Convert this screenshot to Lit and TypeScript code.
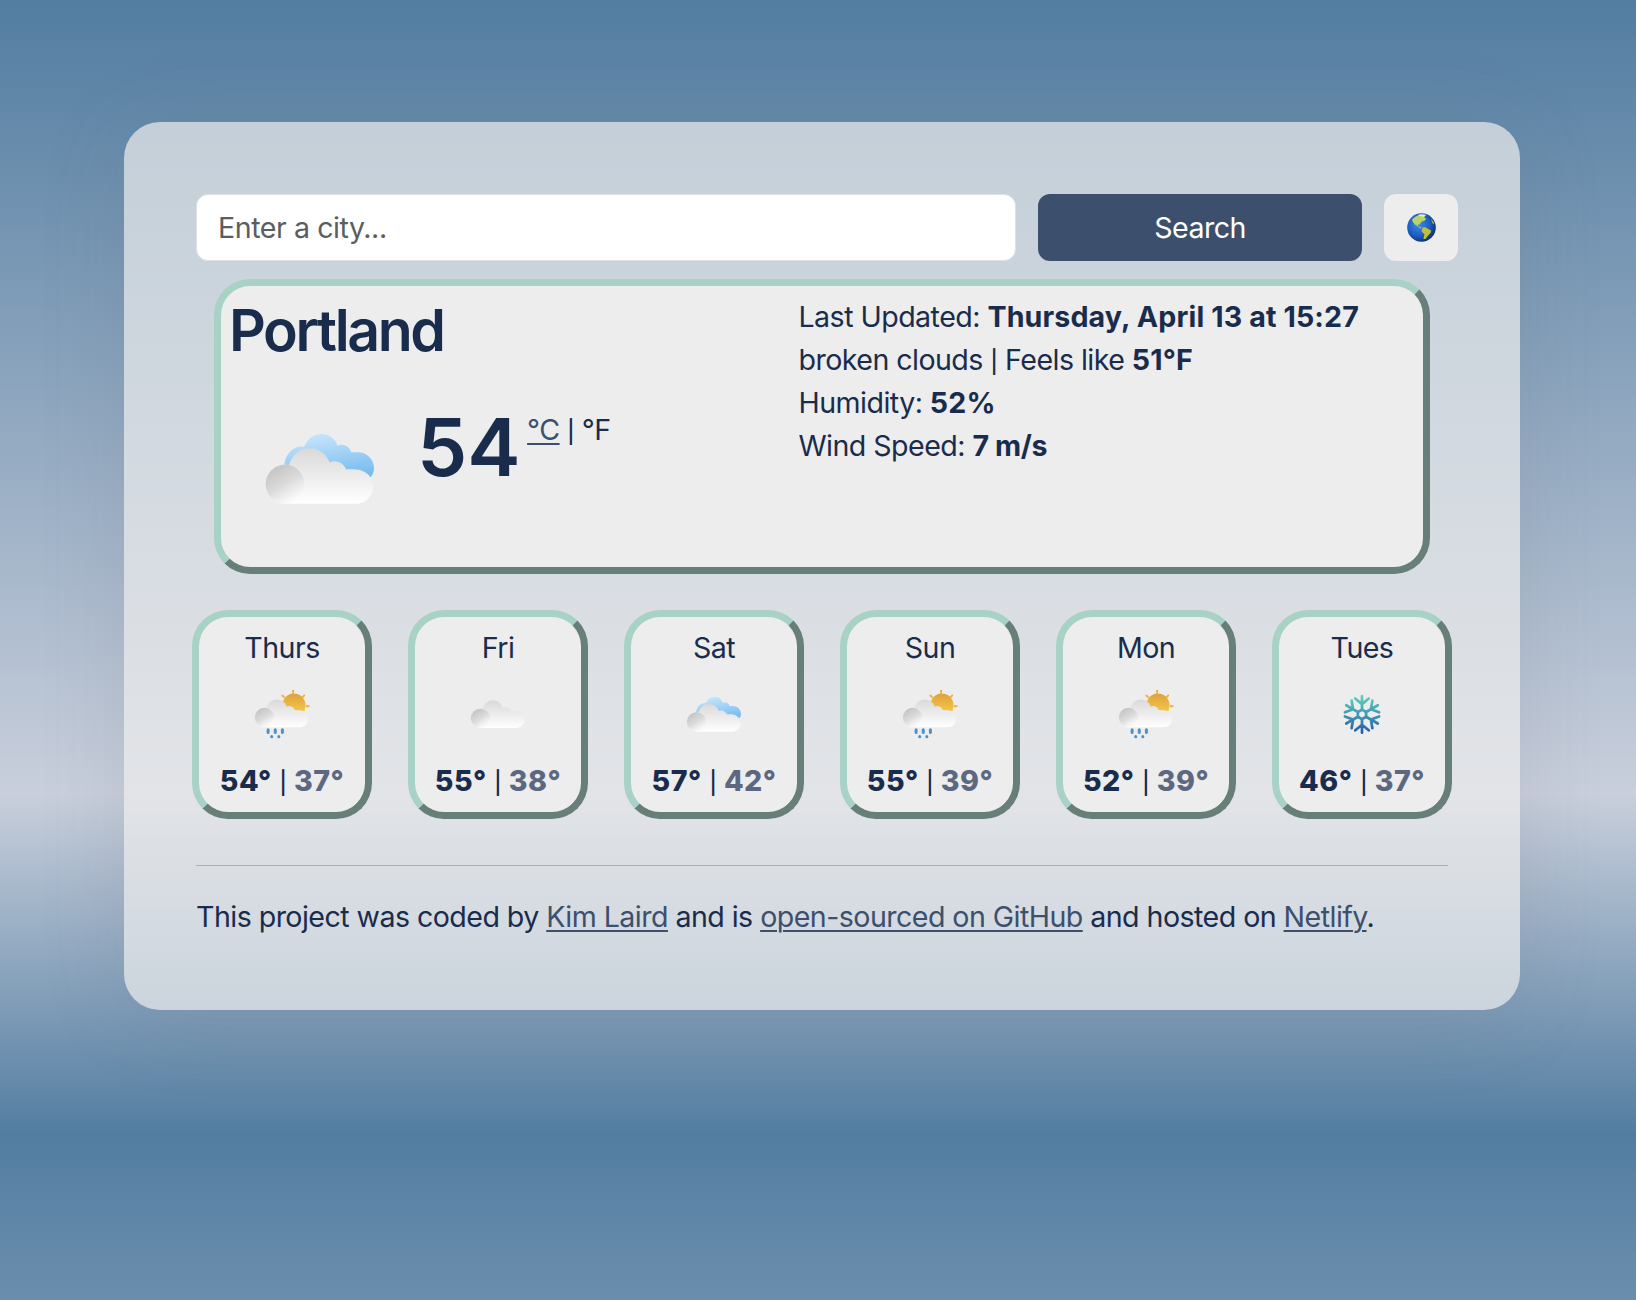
import { LitElement, html, svg, css } from "lit";
import { customElement, property } from "lit/decorators.js";

@customElement("weather-icon")
class WeatherIcon extends LitElement {
  @property() kind = "cloud";
  static styles = css`
    :host { display: block; width: 100%; height: 100%; }
    svg { display: block; width: 100%; height: 100%; overflow: visible; }
  `;
  private cloud(dy = 0) {
    return svg`<g transform="translate(0 ${dy})">
      <path fill="url(#body)" d="M24 86 A24.5 24.5 0 0 1 24 37 L29 37 C33 24 43 16 55 16 C67 16 77 24 80 34 C88 30 98 35 101 43 L112 43 C126 43 135 53 135 64 C135 77 125 86 113 86 Z"/>
      <circle fill="url(#ball)" cx="24" cy="61.5" r="24.5"/>
    </g>`;
  }
  private sun() {
    return svg`<g stroke="#f0b040" stroke-width="5" stroke-linecap="round">
      <path d="M96 -3v5M69 9l4 4M124 9l-4 4M130 36h5"/></g>
      <path fill="url(#sun)" d="M70 25 A29 29 0 0 1 126 41 L125 48 L72 45Z"/>`;
  }
  private rain() {
    return svg`<g stroke="#4b93cc" stroke-width="7.6" stroke-linecap="round">
      <path d="M33 95v7M51 95v7M69 95v7M42 112v1M60 112v1"/></g>`;
  }
  private back() {
    return svg`<path fill="url(#sky)" d="M23 40 C24 24 36 14 48 16 C53 5 61 0 70 0 C80 0 88 7 90 15 C97 11 106 16 107 23 L116 23 C127 23 136 32 136 43 C136 49 134 53 130 56 C124 46 118 45 102 45 L80 60 L30 60Z"/>`;
  }
  private snow() {
    const arms = [0, 60, 120, 180, 240, 300];
    return svg`<g fill="none" stroke="url(#ice)" stroke-width="6.8" stroke-linecap="round" stroke-linejoin="round">
      <path d="${arms.map((a) => {
        const t = (a * Math.PI) / 180;
        const p = (x: number, y: number) =>
          (68 + x * Math.cos(t) - y * Math.sin(t)).toFixed(2) + " " + (56.5 + x * Math.sin(t) + y * Math.cos(t)).toFixed(2);
        return "M" + p(0, -12) + "L" + p(0, -46) + "M" + p(-17, -40) + "L" + p(0, -26) + "L" + p(17, -40) + "M" + p(0, -12) + "L" + p(10.39, -6);
      }).join("")}"/></g>`;
  }
  render() {
    const k = this.kind;
    return html`<svg viewBox="0 0 136 120" aria-hidden="true">
      <defs>
        <linearGradient id="body" gradientUnits="userSpaceOnUse" x1="0" y1="16" x2="0" y2="86"><stop offset="0" stop-color="#d9d9d9"/><stop offset="1" stop-color="#ffffff"/></linearGradient>
        <linearGradient id="ball" x1=".25" y1=".1" x2=".75" y2=".9"><stop offset="0" stop-color="#c6c6c6"/><stop offset=".5" stop-color="#dadada" stop-opacity=".95"/><stop offset="1" stop-color="#fafafa" stop-opacity=".7"/></linearGradient>
        <linearGradient id="sky" x1="0" y1="0" x2=".3" y2="1"><stop offset="0" stop-color="#cfe9fd"/><stop offset="1" stop-color="#7abdee"/></linearGradient>
        <linearGradient id="sun" x1="0" y1="0" x2="0" y2="1"><stop offset="0" stop-color="#dca23f"/><stop offset="1" stop-color="#f4c544"/></linearGradient>
        <linearGradient id="ice" gradientUnits="userSpaceOnUse" x1="0" y1="8" x2="0" y2="106"><stop offset="0" stop-color="#5fd4c0"/><stop offset="1" stop-color="#2459a8"/></linearGradient>
      </defs>
      ${k === "rain" ? svg`${this.sun()}${this.cloud(3)}${this.rain()}` : ""}
      ${k === "cloud" ? this.cloud(5) : ""}
      ${k === "broken" ? svg`<g transform="translate(0 12)">${this.back()}${this.cloud(2)}</g>` : ""}
      ${k === "snow" ? this.snow() : ""}
    </svg>`;
  }
}

interface Day { name: string; icon: string; hi: number; lo: number }

const DAYS: Day[] = [
  { name: "Thurs", icon: "rain", hi: 54, lo: 37 },
  { name: "Fri", icon: "cloud", hi: 55, lo: 38 },
  { name: "Sat", icon: "broken", hi: 57, lo: 42 },
  { name: "Sun", icon: "rain", hi: 55, lo: 39 },
  { name: "Mon", icon: "rain", hi: 52, lo: 39 },
  { name: "Tues", icon: "snow", hi: 46, lo: 37 },
];

@customElement("app-root")
class AppRoot extends LitElement {
  static styles = css`
    :host {
      display: block; box-sizing: border-box; height: 1300px; padding: 122px 116px 0 124px; overflow: hidden;
      background: linear-gradient(#527da1, #c9cfdc 70%, #527da1) 0 0 / 100% 1134px;
      font: 28.6px/43px Inter, "Liberation Sans", sans-serif; color: #1a2c4c;
      letter-spacing: -0.55px;
    }
    * { box-sizing: border-box; }
    .panel {
      height: 888px; padding: 72px; border-radius: 36px; background: rgba(237, 237, 237, .7);
      box-shadow: 0 8px 88px rgba(100, 100, 115, .14);
    }
    .search { display: flex; width: 1262px; height: 67px; gap: 22px; }
    .field {
      flex: none; width: 820px; height: 67px; border: 1px solid #dde2e8; border-radius: 12px; background: #fff;
      padding: 0 21px; font: inherit; letter-spacing: -0.45px; color: #212529; outline: none;
    }
    .field::placeholder { color: #5b5e61; opacity: 1; }
    .btn { border: 0; border-radius: 12px; padding: 0; font: inherit; letter-spacing: inherit; }
    .go { width: 324px; background: #3c506d; color: #fff; }
    .globe { width: 74px; background: #ededed; display: flex; align-items: center; justify-content: center; padding-bottom: 1px; }
    .globe svg { width: 29px; height: 29px; }
    .card { border: 7px solid; border-color: #a8d2c6 #677f78 #677f78 #a8d2c6; border-radius: 36px; background: #ededed; }
    .today { display: flex; width: 1216px; height: 295px; margin: 18px 0 0 18px; padding-top: 9px; }
    .left { width: 577.5px; padding-left: 8px; }
    .city { margin: 0; font-size: 57.2px; font-weight: 600; line-height: 72px; letter-spacing: -2.4px; }
    .now { display: flex; }
    .bigicon { width: 108px; height: 96px; margin: 57px 43px 0 37px; }
    .temp { font-size: 80px; line-height: 96px; font-weight: 600; letter-spacing: 0; margin-top: 32px; }
    .units { margin: 41px 0 0 6.5px; }
    .bar { font-size: 22.5px; font-weight: 500; line-height: 1; }
    .facts { margin: 0; padding: 0; list-style: none; white-space: nowrap; }
    b { font-weight: 700; letter-spacing: 0.14px; }
    .tight { letter-spacing: -0.4px; }
    a { color: #3c506d; text-decoration: underline; text-decoration-thickness: 2px; text-underline-offset: 3px; }
    .week { display: flex; gap: 36px; margin: 36px 0 0 -4px; }
    .day { flex: none; width: 180px; height: 209px; text-align: center; display: flex; flex-direction: column; align-items: center; padding-top: 9px; }
    .dayicon { width: 54px; height: 47.6px; margin: 23px 0 19px; }
    .range b { font-weight: 800; letter-spacing: 0.5px; }
    .lo { color: #5b6880; }
    .rule { height: 1px; width: 1252px; margin: 46px 0 29px; background: #a9b1bf; }
    .foot { margin: 0; white-space: nowrap; }
  `;
  render() {
    const bar = html`<span class="bar">|</span>`;
    return html`<main class="panel">
      <form class="search">
        <input class="field" placeholder="Enter a city..." />
        <button class="btn go" type="button">Search</button>
        <button class="btn globe" type="button">
          <svg viewBox="0 0 30 30">
            <defs><radialGradient id="sea" cx=".4" cy=".4" r=".62"><stop offset="0" stop-color="#3f8ae6"/><stop offset=".65" stop-color="#1c5bc2"/><stop offset="1" stop-color="#123075"/></radialGradient></defs>
            <circle cx="15" cy="15" r="14.8" fill="url(#sea)"/>
            <path fill="#b8d468" d="M5 7Q9 2 15 2L19 2 18 5 20 6 18 8 15 9 13 12 11 12 12 14 15 15 14 16 10 13 8 12 6 9Z"/>
            <path fill="#c3bf35" d="M16 15Q19 14 21 16L25 18Q25 21 22 23L19 27 17 27 18 22 15 19Z"/>
            <path fill="#e6efd0" d="M11 2Q15 .5 20 2L17 4 13 3Z"/>
            <path fill="#a6b845" d="M25 6L28 10 28 12 26 10Z"/>
          </svg>
        </button>
      </form>
      <section class="card today">
        <div class="left">
          <h1 class="city">Portland</h1>
          <div class="now">
            <div class="bigicon"><weather-icon kind="broken"></weather-icon></div>
            <div class="temp">54</div>
            <div class="units"><a>°C</a> ${bar} °F</div>
          </div>
        </div>
        <ul class="facts">
          <li>Last Updated: <b>Thursday, April 13 at 15:27</b></li>
          <li>broken clouds ${bar} Feels like <b>51°F</b></li>
          <li>Humidity: <b>52%</b></li>
          <li>Wind Speed: <b class="tight">7 m/s</b></li>
        </ul>
      </section>
      <section class="week">
        ${DAYS.map((d) => html`<div class="card day">
          <div>${d.name}</div>
          <div class="dayicon"><weather-icon kind=${d.icon}></weather-icon></div>
          <div class="range"><b>${d.hi}°</b> ${bar} <b class="lo">${d.lo}°</b></div>
        </div>`)}
      </section>
      <div class="rule"></div>
      <p class="foot">This project was coded by <a>Kim Laird</a> and is <a>open-sourced on GitHub</a> and hosted on <a>Netlify</a>.</p>
    </main>`;
  }
}
